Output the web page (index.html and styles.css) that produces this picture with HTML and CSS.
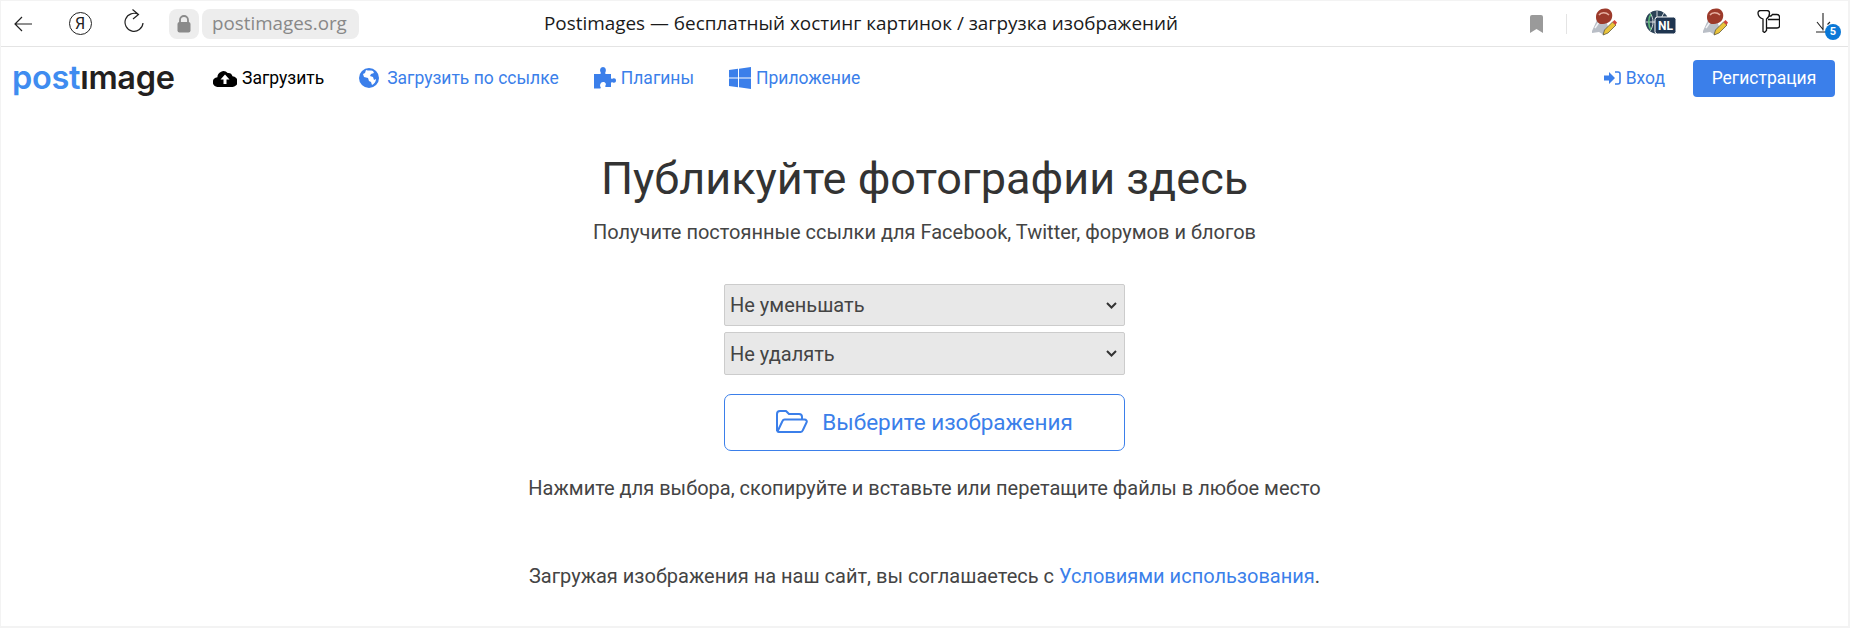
FILE: index.html
```html
<!DOCTYPE html>
<html lang="ru">
<head>
    <meta charset="UTF-8">
    <meta name="viewport" content="width=device-width, initial-scale=1.0">
    <title>Postimages — бесплатный хостинг картинок / загрузка изображений</title>
    <link rel="stylesheet" href="styles.css">
</head>
<body>
    <header class="browser-bar">
        <div class="browser-left">
            <button class="chrome-btn btn-back" aria-label="Назад">
                <svg width="18" height="16" viewBox="0 0 18 16"><path d="M8 1 1 8l7 7M1 8h17" fill="none" stroke="#222" stroke-width="1.2"/></svg>
            </button>
            <button class="chrome-btn btn-ya" aria-label="Яндекс"><span class="ya-circle">Я</span></button>
            <button class="chrome-btn btn-reload" aria-label="Обновить">
                <svg width="20" height="24" viewBox="0 0 20 24"><path d="M14.500 5.500A9 9 0 1 0 19 14M8.500.5l6 5-5.500 4.500" fill="none" stroke="#222" stroke-width="1.2"/></svg>
            </button>
            <div class="lock-box">
                <svg width="14" height="18" viewBox="0 0 14 18"><path d="M3 8V5a4 4 0 0 1 8 0v3" fill="none" stroke="#8a8a8a" stroke-width="1.8"/><rect x="0.5" y="7" width="13" height="10.5" rx="2" fill="#8a8a8a"/></svg>
            </div>
            <div class="url-box">postimages.org</div>
        </div>
        <div class="browser-title">Postimages — бесплатный хостинг картинок / загрузка изображений</div>
        <div class="browser-right">
            <svg class="ext-bookmark" width="13" height="18" viewBox="0 0 13 18"><path d="M0 2a2 2 0 0 1 2-2h9a2 2 0 0 1 2 2v16l-6.500-4L0 18z" fill="#9a9a9a"/></svg>
            <span class="ext-divider"></span>
            <svg class="ext-stamp" width="26" height="28" viewBox="0 0 26 28">
                <path d="M1 23 6 12h9l3 10-5 5-5-3-7 1z" fill="#b9bec6"/>
                <path d="M4 20l4-6 5 1" stroke="#f2f3f5" stroke-width="1.500" fill="none"/>
                <path d="M5 9c0-6 5-9 10-8.500s7 5 6 9-4 6-9 6.500-7-3-7-7z" fill="#9c3a2b"/>
                <path d="M8 7c2-3 7-3 10 0" stroke="#e6b0a2" stroke-width="1.500" fill="none"/>
                <path d="m12 27 1.500-5 8-8 3.500 3-8 8z" fill="#eac33a" stroke="#4f4a30" stroke-width=".7"/>
                <path d="m21.500 14 2-2 2.500 2.500-1.500 2.500z" fill="#d2453a"/>
            </svg>
            <svg class="ext-vpn" width="31" height="24" viewBox="0 0 31 24">
                <circle cx="12" cy="12" r="11.500" fill="#2b4257"/>
                <path d="M1 12h22M12 1v22M5 3c4 5 4 13 0 18M19 3c-4 5-4 13 0 18" stroke="#fff" stroke-width=".8" fill="none"/>
                <path d="M6 4c-3 4-3 12 0 16" stroke="#5cb878" stroke-width="1.600" fill="none"/>
                <rect x="10" y="7" width="21" height="17" rx="2.500" fill="#1f3550" stroke="#fff" stroke-width="1"/>
                <text x="20.500" y="20" class="vpn-label">NL</text>
            </svg>
            <svg class="ext-stamp ext-stamp-2" width="26" height="28" viewBox="0 0 26 28">
                <path d="M1 23 6 12h9l3 10-5 5-5-3-7 1z" fill="#b9bec6"/>
                <path d="M4 20l4-6 5 1" stroke="#f2f3f5" stroke-width="1.500" fill="none"/>
                <path d="M5 9c0-6 5-9 10-8.500s7 5 6 9-4 6-9 6.500-7-3-7-7z" fill="#9c3a2b"/>
                <path d="M8 7c2-3 7-3 10 0" stroke="#e6b0a2" stroke-width="1.500" fill="none"/>
                <path d="m12 27 1.500-5 8-8 3.500 3-8 8z" fill="#eac33a" stroke="#4f4a30" stroke-width=".7"/>
                <path d="m21.500 14 2-2 2.500 2.500-1.500 2.500z" fill="#d2453a"/>
            </svg>
            <svg class="ext-keys" width="23" height="23" viewBox="0 0 23 23">
                <path d="M1 3c0-1.500 1-2.500 2.500-2.500H10C11.500.5 12.500 1.500 12.500 3c0 3-1.500 5-3 6v11.500l-2 2-1.500-1V9C3 8 1 6 1 3z" fill="none" stroke="#111" stroke-width="1.300"/>
                <path d="M12 6h2l1.500-1.500H20c1.500 0 2.500 1 2.500 2.500v9c0 1.500-1 2-2.500 2H10M11 9.500h11.500" fill="none" stroke="#111" stroke-width="1.300"/>
            </svg>
            <div class="ext-download">
                <svg width="20" height="22" viewBox="0 0 20 22"><path d="M7 0v17.500M1 9l6 7.500M0 19h10M14 9l-2.500 2.500" fill="none" stroke="#222" stroke-width="1.100"/></svg>
                <span class="badge">5</span>
            </div>
        </div>
    </header>

    <nav class="nav">
        <a class="logo" href="#" aria-label="postimage"><span class="logo-post">post</span><span class="logo-image">ımage</span></a>
        <div class="nav-links">
            <a class="nav-link active" href="#">
                <svg width="24" height="18" viewBox="0 0 24 18"><path d="M19.500 7.300A4.500 4.500 0 0 0 14.700 4 6 6 0 0 0 4.400 8.200 4.700 4.700 0 0 0 5 18h14a5.300 5.300 0 0 0 .5-10.700z" fill="#000"/><path d="M12 5.500 7.500 10.500h3V15h3v-4.500h3z" fill="#fff"/></svg>
                Загрузить
            </a>
            <a class="nav-link link-globe" href="#">
                <svg width="20" height="20" viewBox="0 0 20 20"><circle cx="10" cy="10" r="10" fill="#3b7fea"/><path d="M7 2c2 1 5 0 7 1l1 2-3 1-1 2 3 1 1 3 2-1c0 3-2 5-4 6l-1-3-2-1-1-3-4-1-1-3 2-1z" fill="#fff"/></svg>
                Загрузить по ссылке
            </a>
            <a class="nav-link" href="#">
                <svg width="22" height="22" viewBox="0 0 22 22"><path d="M0 7h6c1 0 1-1 .5-2C5.500 3 6.500 0 9 0s3.500 3 2.500 5c-.5 1-.5 2 .5 2h5v4c0 1 1 1 2 .5 1.500-.7 3 .2 3 2s-1.500 2.700-3 2c-1-.5-2-.5-2 .5v4h-5c-1 0-1-1-.5-1.500 1-1.500 0-3.500-2.500-3.500S5.500 18.500 6.500 20c.5.500.5 1.500-.5 1.500H0z" fill="#3b7fea"/></svg>
                Плагины
            </a>
            <a class="nav-link" href="#">
                <svg width="22" height="22" viewBox="0 0 22 22"><path d="m0 3.100 9-1.300v8.700H0zM10 1.700 22 0v10.500H10zM0 11.500h9v8.700L0 18.900zM10 11.500h12V22l-12-1.700z" fill="#3b7fea"/></svg>
                Приложение
            </a>
        </div>
        <div class="nav-right">
            <a class="nav-link login" href="#">
                <svg width="17" height="14" viewBox="0 0 17 14"><path d="M0 4.500h5V1l6 6-6 6V9.500H0z" fill="#3b7fea"/><path d="M11 1h3a2 2 0 0 1 2 2v8a2 2 0 0 1-2 2h-3" fill="none" stroke="#3b7fea" stroke-width="1.600"/></svg>
                Вход
            </a>
            <a class="signup" href="#">Регистрация</a>
        </div>
    </nav>

    <main class="main">
        <h1>Публикуйте фотографии здесь</h1>
        <p class="lead">Получите постоянные ссылки для Facebook, Twitter, форумов и блогов</p>
        <div class="upload-form">
            <select class="field field-resize">
                <option>Не уменьшать</option>
            </select>
            <select class="field field-expire">
                <option>Не удалять</option>
            </select>
            <button class="choose" type="button">
                <svg width="32" height="24" viewBox="0 0 32 24"><path d="M1 21V4a3 3 0 0 1 3-3h6l3 3h10a3 3 0 0 1 3 3v2.500M1.500 21.500 6.500 11a2.500 2.500 0 0 1 2.200-1.500h19.800c1.800 0 2.800 1.500 2 3l-3.700 7.800a2.500 2.500 0 0 1-2.200 1.700H3a2 2 0 0 1-1.500-.5z" fill="none" stroke="#3b7fea" stroke-width="2" stroke-linejoin="round"/></svg>
                Выберите изображения
            </button>
        </div>
        <p class="hint">Нажмите для выбора, скопируйте и вставьте или перетащите файлы в любое место</p>
        <p class="terms">Загружая изображения на наш сайт, вы соглашаетесь с <a href="#">Условиями использования</a>.</p>
    </main>
</body>
</html>
```

FILE: styles.css
```css
* {
    box-sizing: border-box;
}
html, body {
    height: 100%;
}
body {
    margin: 0;
    font-family: Roboto, Arial, sans-serif;
    font-size: 17.5px;
    color: #444;
    background-color: #fff;
    border: 2px solid #f3f3f3;
    border-top-width: 1px;
    border-left-width: 1px;
    overflow: hidden;
}
a {
    color: #3b7fea;
    text-decoration: none;
}

/* browser toolbar */
.browser-bar {
    position: relative;
    height: 46px;
    display: flex;
    align-items: center;
    justify-content: space-between;
    border-bottom: 1px solid #e4e4e4;
    font-family: "Open Sans", "Noto Sans", sans-serif;
}
.browser-left {
    display: flex;
    align-items: center;
}
.chrome-btn {
    border: none;
    background: none;
    padding: 0;
    display: flex;
    align-items: center;
    justify-content: center;
}
.btn-back {
    width: 18px;
    margin-left: 13px;
}
.btn-ya {
    width: 24px;
    margin-left: 36px;
}
.btn-reload {
    width: 20px;
    margin-left: 32px;
    margin-bottom: 6px;
}
.ya-circle {
    width: 23px;
    height: 23px;
    border: 1.2px solid #222;
    border-radius: 50%;
    font: 16px/21px Roboto, sans-serif;
    color: #222;
    text-align: center;
}
.lock-box {
    width: 30px;
    height: 30px;
    margin-left: 25px;
    border-radius: 8px;
    background-color: #ededed;
    display: flex;
    align-items: center;
    justify-content: center;
}
.url-box {
    width: 157px;
    height: 30px;
    margin-left: 3px;
    padding-left: 10px;
    border-radius: 8px;
    background-color: #ededed;
    color: #888;
    font-size: 18.8px;
    line-height: 29px;
    white-space: nowrap;
}
.browser-title {
    position: absolute;
    left: 543px;
    top: 0;
    font-size: 18.9px;
    line-height: 45px;
    color: #1a1a1a;
}
.browser-right {
    display: flex;
    align-items: center;
    padding-right: 6px;
}
.ext-divider {
    width: 1px;
    height: 20px;
    margin-left: 23px;
    background-color: #e4e4e4;
}
.ext-stamp {
    margin-left: 24px;
    margin-bottom: 4px;
}
.ext-vpn {
    margin-left: 28px;
    margin-bottom: 4px;
}
.ext-stamp-2 {
    margin-left: 26px;
}
.ext-keys {
    margin-left: 29px;
    margin-bottom: 4px;
}
.ext-download {
    position: relative;
    width: 26px;
    height: 26px;
    margin-left: 36px;
    padding-top: 2px;
}
.badge {
    position: absolute;
    right: 1px;
    bottom: -3px;
    width: 16px;
    height: 16px;
    border-radius: 50%;
    background-color: #0a78d7;
    color: #fff;
    font: bold 11px/16px Roboto, sans-serif;
    text-align: center;
}
.vpn-label {
    font: bold 12px Roboto, sans-serif;
    fill: #fff;
    text-anchor: middle;
}

/* site nav */
.nav {
    display: flex;
    align-items: center;
    height: 62px;
    padding: 0 13px 0 11px;
}
.logo {
    display: flex;
    align-items: baseline;
    width: 161px;
    font-family: Inter, sans-serif;
    font-size: 32.5px;
    font-weight: 600;
    letter-spacing: -0.3px;
    line-height: 1;
}
.logo-post {
    color: #3f8cf0;
}
.logo-image {
    color: #231f20;
}
.nav-links {
    display: flex;
    align-items: center;
    gap: 35px;
    margin-left: 40px;
}
.nav-link {
    display: flex;
    align-items: center;
    gap: 5px;
    font-size: 17.5px;
}
.link-globe {
    gap: 8px;
}
.nav-link.active {
    color: #000;
}
.nav-right {
    display: flex;
    align-items: center;
    margin-left: auto;
}
.signup {
    width: 142px;
    height: 37px;
    margin-left: 28px;
    border-radius: 4px;
    background-color: #3b7fea;
    color: #fff;
    text-align: center;
    font-size: 17.5px;
    line-height: 37px;
}

/* upload area */
.main {
    display: flex;
    flex-direction: column;
    align-items: center;
}
h1 {
    margin: 42px 0 0;
    font-size: 45px;
    font-weight: 400;
    line-height: 56px;
    color: #333;
}
.lead {
    margin: 13px 0 0;
    font-size: 20px;
    line-height: 24px;
}
.upload-form {
    width: 401px;
    margin-top: 40px;
    display: flex;
    flex-direction: column;
}
.field {
    appearance: none;
    width: 100%;
    height: 43px;
    padding: 0 5px;
    background: #e8e8e8 url("data:image/svg+xml,%3Csvg xmlns='http://www.w3.org/2000/svg' width='11' height='7'%3E%3Cpath d='M1 1l4.500 4.500L10 1' fill='none' stroke='%23333' stroke-width='2'/%3E%3C/svg%3E") no-repeat right 7px center;
    border: 1px solid #ccc;
    border-radius: 2px;
    font-family: Roboto, sans-serif;
    font-size: 20px;
    color: #444;
}
.field-resize {
    height: 42px;
}
.field-expire {
    margin-top: 6px;
}
.choose {
    width: 100%;
    height: 57px;
    margin-top: 19px;
    padding-bottom: 3px;
    background-color: #fff;
    border: 1px solid #3b7fea;
    border-radius: 7px;
    display: flex;
    align-items: center;
    justify-content: center;
    gap: 14px;
    font-family: Roboto, sans-serif;
    font-size: 22.5px;
    color: #3b7fea;
}
.hint {
    margin: 25px 0 0;
    font-size: 20px;
    line-height: 24px;
}
.terms {
    margin: 64px 0 0;
    font-size: 20px;
    line-height: 24px;
}
```
